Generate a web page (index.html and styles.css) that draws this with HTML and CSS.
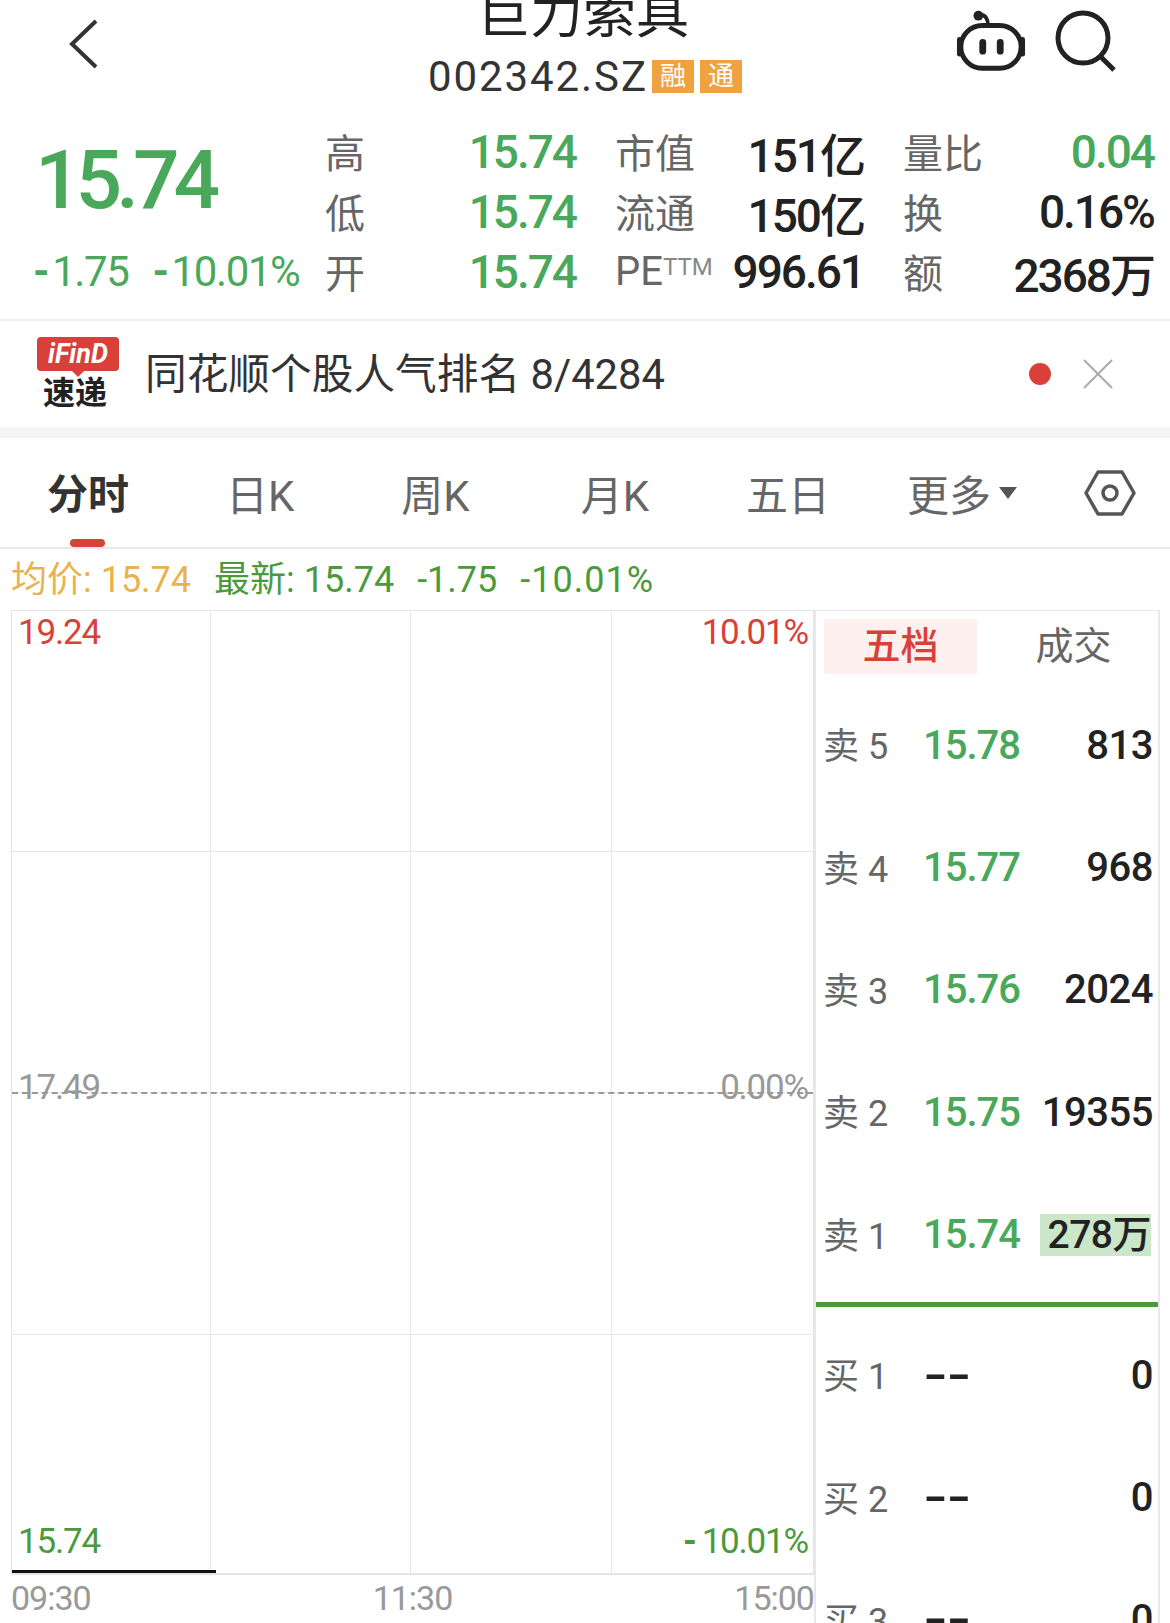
FILE: index.html
```html
<!DOCTYPE html>
<html lang="zh-CN">
<head>
    <meta charset="UTF-8">
    <title>巨力索具</title>
    <link rel="stylesheet" href="styles.css">
</head>
<body>
    <header class="topbar">
        <div class="topbar-left">
            <svg class="icon-back" width="32" height="52" viewBox="0 0 32 52"><path d="M28 3 L4 26 L28 49" fill="none" stroke="#333" stroke-width="4"/></svg>
        </div>
        <div class="stock-title">
            <div class="stock-name">巨力索具</div>
            <div class="stock-code">002342.SZ<span class="badge badge-first">融</span><span class="badge">通</span></div>
        </div>
        <div class="topbar-right">
            <svg width="70" height="62" viewBox="0 0 72 62">
                <path d="M25 4 C30 4 33 8 33 15" fill="none" stroke="#222" stroke-width="4" stroke-linecap="round"/>
                <circle cx="23" cy="5" r="5" fill="#222"/>
                <rect x="5" y="15" width="62" height="44" rx="22" fill="none" stroke="#222" stroke-width="5"/>
                <rect x="1" y="27" width="5" height="20" rx="2.5" fill="#222"/>
                <rect x="66" y="27" width="5" height="20" rx="2.5" fill="#222"/>
                <rect x="24" y="29" width="7" height="16" rx="3.5" fill="#222"/>
                <rect x="42" y="29" width="7" height="16" rx="3.5" fill="#222"/>
            </svg>
            <svg width="66" height="64" viewBox="0 0 66 64">
                <circle cx="29" cy="28" r="25" fill="none" stroke="#222" stroke-width="5"/>
                <path d="M46 46 L60 60" fill="none" stroke="#222" stroke-width="5"/>
            </svg>
        </div>
    </header>

    <section class="quote">
        <div class="quote-main">
            <div class="quote-price">15.74</div>
            <div class="quote-change"><span><span class="minus">-</span>1.75</span><span><span class="minus">-</span>10.01%</span></div>
        </div>
        <div class="quote-grid">
            <div class="stat"><span class="stat-label">高</span><span class="stat-value up">15.74</span></div>
            <div class="stat"><span class="stat-label">市值</span><span class="stat-value">151亿</span></div>
            <div class="stat"><span class="stat-label">量比</span><span class="stat-value up">0.04</span></div>
            <div class="stat"><span class="stat-label">低</span><span class="stat-value up">15.74</span></div>
            <div class="stat"><span class="stat-label">流通</span><span class="stat-value">150亿</span></div>
            <div class="stat"><span class="stat-label">换</span><span class="stat-value">0.16%</span></div>
            <div class="stat"><span class="stat-label">开</span><span class="stat-value up">15.74</span></div>
            <div class="stat"><span class="stat-label">PE<sup class="ttm">TTM</sup></span><span class="stat-value">996.61</span></div>
            <div class="stat"><span class="stat-label">额</span><span class="stat-value">2368万</span></div>
        </div>
    </section>

    <section class="notice">
        <div class="ifind">
            <div class="ifind-tag">iFinD</div>
            <div class="ifind-text">速递</div>
        </div>
        <div class="notice-text">同花顺个股人气排名 8/4284</div>
        <span class="notice-dot"></span>
        <svg class="notice-close" width="30" height="30" viewBox="0 0 30 30"><path d="M1 1 L29 29 M29 1 L1 29" stroke="#aaa" stroke-width="2" fill="none"/></svg>
    </section>

    <nav class="tabs">
        <div class="tab tab-active">分时</div>
        <div class="tab">日K</div>
        <div class="tab">周K</div>
        <div class="tab">月K</div>
        <div class="tab">五日</div>
        <div class="tab tab-more">更多<span class="caret"></span></div>
        <svg class="tab-setting" width="52" height="48" viewBox="0 0 52 48">
            <path d="M14 3 H38 L50 24 L38 45 H14 L2 24 Z" fill="none" stroke="#555" stroke-width="3.5" stroke-linejoin="round"/>
            <circle cx="26" cy="24" r="7" fill="none" stroke="#555" stroke-width="3.5"/>
        </svg>
    </nav>

    <div class="infoline">
        <span class="avg">均价: 15.74</span>
        <span class="latest">最新: 15.74</span>
        <span class="latest">-1.75</span>
        <span class="latest latest-pct">-10.01%</span>
    </div>

    <main class="board">
        <div class="chart-col">
            <div class="chart">
                <div class="cell"></div><div class="cell"></div><div class="cell"></div><div class="cell"></div>
                <div class="cell"></div><div class="cell"></div><div class="cell"></div><div class="cell"></div>
                <div class="cell"></div><div class="cell"></div><div class="cell"></div><div class="cell"></div>
                <div class="cell"></div><div class="cell"></div><div class="cell"></div><div class="cell"></div>
                <div class="midline"></div>
                <div class="price-line"></div>
                <span class="axis axis-tl">19.24</span>
                <span class="axis axis-tr">10.01%</span>
                <span class="axis axis-ml">17.49</span>
                <span class="axis axis-mr">0.00%</span>
                <span class="axis axis-bl">15.74</span>
                <span class="axis axis-br"><span class="minus">-</span>10.01%</span>
            </div>
            <div class="times"><span>09:30</span><span>11:30</span><span>15:00</span></div>
        </div>
        <aside class="depth">
            <div class="depth-tabs">
                <div class="depth-tab depth-tab-active">五档</div>
                <div class="depth-tab">成交</div>
            </div>
            <div class="depth-row"><span class="depth-label">卖 5</span><span class="depth-price">15.78</span><span class="depth-vol">813</span></div>
            <div class="depth-row"><span class="depth-label">卖 4</span><span class="depth-price">15.77</span><span class="depth-vol">968</span></div>
            <div class="depth-row"><span class="depth-label">卖 3</span><span class="depth-price">15.76</span><span class="depth-vol">2024</span></div>
            <div class="depth-row"><span class="depth-label">卖 2</span><span class="depth-price">15.75</span><span class="depth-vol">19355</span></div>
            <div class="depth-row"><span class="depth-label">卖 1</span><span class="depth-price">15.74</span><span class="depth-vol depth-vol-hl">278万</span></div>
            <div class="depth-split"></div>
            <div class="depth-row"><span class="depth-label">买 1</span><span class="depth-price depth-empty">--</span><span class="depth-vol">0</span></div>
            <div class="depth-row"><span class="depth-label">买 2</span><span class="depth-price depth-empty">--</span><span class="depth-vol">0</span></div>
            <div class="depth-row"><span class="depth-label">买 3</span><span class="depth-price depth-empty">--</span><span class="depth-vol">0</span></div>
        </aside>
    </main>
</body>
</html>
```

FILE: styles.css
```css
html, body {
    margin: 0;
    padding: 0;
}
body {
    width: 1170px;
    height: 1623px;
    overflow: hidden;
    background: #fff;
    color: #222;
    font-family: Roboto, "Noto Sans CJK SC", sans-serif;
}

/* top bar */
.topbar {
    display: grid;
    grid-template-columns: 1fr auto 1fr;
    height: 110px;
}
.topbar-left {
    padding: 18px 0 0 68px;
}
.icon-back {
    display: block;
}
.stock-title {
    text-align: center;
}
.stock-name {
    height: 52px;
    margin: -15px 4px 0 0;
    font-size: 53px;
    line-height: 60px;
    color: #222;
}
.stock-code {
    display: flex;
    align-items: center;
    height: 50px;
    margin-top: 14px;
    font-size: 42px;
    letter-spacing: 1.9px;
    color: #333;
}
.badge {
    width: 42px;
    height: 33px;
    margin-left: 6px;
    background: #f0a23f;
    color: #fff;
    font-size: 26px;
    line-height: 33px;
    letter-spacing: 0;
    text-align: center;
}
.badge-first {
    margin-left: 4px;
}
.topbar-right {
    display: flex;
    justify-content: flex-end;
    gap: 28px;
    padding: 10px 50px 0 0;
    align-items: flex-start;
}

/* quote block */
.quote {
    display: flex;
    height: 209px;
    border-bottom: 2px solid #eee;
}
.quote-main {
    width: 292px;
    padding-left: 33px;
    color: #4aa85a;
}
.quote-price {
    height: 132px;
    padding-left: 2px;
    font-size: 82px;
    font-weight: 500;
    line-height: 140px;
    letter-spacing: -6px;
}
.quote-change {
    display: flex;
    gap: 24px;
    font-size: 42px;
    line-height: 60px;
    letter-spacing: -1.4px;
}
.minus {
    margin-right: 4px;
    font-weight: 700;
}
.quote-grid {
    display: grid;
    grid-template-columns: 251px 249px 251px;
    grid-auto-rows: 60px;
    column-gap: 39px;
    padding-top: 11px;
}
.stat {
    display: flex;
    justify-content: space-between;
    align-items: center;
}
.stat-label {
    font-size: 40px;
    color: #666;
    white-space: nowrap;
}
.ttm {
    font-size: 24px;
    vertical-align: 10px;
    line-height: 0;
    color: #888;
}
.stat-value {
    margin-top: 2px;
    font-size: 46px;
    font-weight: 500;
    letter-spacing: -2px;
    color: #222;
    white-space: nowrap;
}
.stat-value.up {
    color: #4aa85a;
}

/* notice */
.notice {
    display: flex;
    align-items: center;
    height: 106px;
    padding: 0 57px 0 37px;
    border-bottom: 11px solid #f5f5f5;
}
.ifind {
    width: 82px;
    text-align: center;
}
.ifind-tag {
    position: relative;
    height: 34px;
    border-radius: 4px;
    background: #d9403a;
    color: #fff;
    font-size: 27px;
    font-weight: 700;
    font-style: italic;
    line-height: 35px;
}
.ifind-tag::after {
    content: "";
    position: absolute;
    left: 35px;
    top: 34px;
    border: 6px solid transparent;
    border-top-color: #d9403a;
    border-bottom-width: 0;
}
.ifind-text {
    margin: 3px 6px 0 0;
    font-size: 32px;
    font-weight: 700;
    line-height: 38px;
    color: #222;
}
.notice-text {
    flex: 1;
    margin: -6px 0 0 26px;
    font-size: 41.7px;
    color: #333;
}
.notice-dot {
    width: 22px;
    height: 22px;
    border-radius: 50%;
    background: #d9403a;
}
.notice-close {
    margin-left: 32px;
}

/* period tabs */
.tabs {
    display: flex;
    align-items: center;
    height: 109px;
    border-bottom: 2px solid #e8e8e8;
}
.tab {
    font-size: 42px;
    color: #666;
}
.tab:nth-child(1) { margin-left: 47px; }
.tab:nth-child(2) { margin-left: 97px; }
.tab:nth-child(3) { margin-left: 107px; }
.tab:nth-child(4) { margin-left: 111px; }
.tab:nth-child(5) { margin-left: 97px; }
.tab:nth-child(6) { margin-left: 77px; }
.tab-active {
    position: relative;
    align-self: stretch;
    font-size: 41px;
    line-height: 114px;
    font-weight: 700;
    color: #333;
}
.tab-active::after {
    content: "";
    position: absolute;
    left: 23px;
    bottom: 0;
    width: 35px;
    height: 8px;
    border-radius: 4px;
    background: #d9403a;
}
.tab-more {
    display: flex;
    align-items: center;
}
.caret {
    margin-left: 8px;
    border-style: solid;
    border-width: 12px 9px 0;
    border-color: #555 transparent transparent;
}
.tab-setting {
    margin-left: 67px;
}

/* latest line */
.infoline {
    display: flex;
    gap: 23px;
    height: 61px;
    padding-left: 11px;
    font-size: 36px;
    line-height: 62px;
    white-space: nowrap;
}
.avg {
    color: #e9b24f;
}
.latest {
    color: #4a9a3c;
}
.latest-pct {
    letter-spacing: 1px;
}

/* chart and depth */
.board {
    display: flex;
    padding-left: 11px;
}
.chart-col {
    width: 803px;
}
.chart {
    position: relative;
    display: grid;
    grid-template-columns: 199px 200px 201px 203px;
    grid-template-rows: 241px 241px 242px 241px;
    height: 965px;
    box-sizing: border-box;
    border: solid #e4e4e4;
    border-width: 1px 1px 2px 1px;
}
.cell {
    border-right: 1px solid #e8e8e8;
    border-bottom: 1px solid #e8e8e8;
}
.cell:nth-child(4n) {
    border-right: none;
}
.cell:nth-child(n+13) {
    border-bottom: none;
}
.midline {
    position: absolute;
    left: 0;
    right: 0;
    top: 481px;
    border-top: 2px dashed #999;
}
.price-line {
    position: absolute;
    left: 0;
    bottom: 0;
    width: 204px;
    height: 3px;
    background: #111;
}
.axis {
    position: absolute;
    font-size: 35px;
    line-height: 40px;
    letter-spacing: -1.2px;
}
.axis .minus {
    margin-right: 6px;
}
.axis-tl { left: 6px; top: 2px; color: #d9403a; }
.axis-tr { right: 5px; top: 2px; color: #d9403a; }
.axis-ml { left: 6px; top: 457px; color: #999; }
.axis-mr { right: 5px; top: 457px; color: #999; }
.axis-bl { left: 6px; top: 911px; color: #4a9a3c; }
.axis-br { right: 5px; top: 911px; color: #4a9a3c; }
.times {
    display: flex;
    justify-content: space-between;
    font-size: 34px;
    line-height: 46px;
    letter-spacing: -1px;
    color: #999;
}
.depth {
    width: 346px;
    height: 1013px;
    overflow: hidden;
    box-sizing: border-box;
    border-top: 1px solid #e8e8e8;
    border-left: 2px solid #e8e8e8;
    border-right: 2px solid #e8e8e8;
}
.depth-tabs {
    display: flex;
    height: 55px;
    margin: 8px 0 10px 8px;
}
.depth-tab {
    width: 153px;
    font-size: 38px;
    line-height: 55px;
    text-align: center;
    color: #666;
}
.depth-tab + .depth-tab {
    margin-left: 20px;
}
.depth-tab-active {
    background: #fdf0ef;
    color: #d9403a;
    font-weight: 500;
}
.depth-row {
    display: flex;
    align-items: center;
    height: 122.4px;
    padding: 0 5px 0 7px;
    white-space: nowrap;
}
.depth-label {
    width: 100px;
    margin-top: -4px;
    font-size: 36px;
    color: #666;
}
.depth-price {
    font-size: 40px;
    letter-spacing: -1px;
    color: #4aa85a;
    font-weight: 500;
}
.depth-empty {
    color: #222;
    font-weight: 700;
    transform: scaleX(1.6);
    transform-origin: left center;
}
.depth-vol {
    margin-left: auto;
    font-size: 40px;
    letter-spacing: -0.5px;
    font-weight: 500;
    color: #222;
}
.depth-vol-hl {
    margin-right: 2px;
    padding: 0 0 0 8px;
    background: #cbe6c8;
    font-size: 39px;
    line-height: 42px;
}
.depth-split {
    height: 5px;
    margin: 6px -2px 7px;
    background: #4a9a3c;
}
```
